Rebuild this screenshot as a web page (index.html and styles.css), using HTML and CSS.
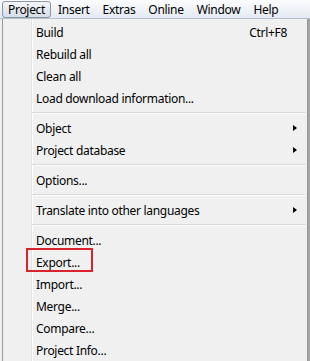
FILE: index.html
```html
<!DOCTYPE html>
<html lang="en">
<head>
  <meta charset="UTF-8" />
  <meta name="viewport" content="width=device-width, initial-scale=1" />
  <title>Project menu</title>
  <link rel="stylesheet" href="styles.css">
</head>
<body>
  <div class="menubar">
    <span class="top-item active">Project</span>
    <span class="top-item">Insert</span>
    <span class="top-item">Extras</span>
    <span class="top-item">Online</span>
    <span class="top-item">Window</span>
    <span class="top-item">Help</span>
  </div>

  <div class="screen">
    <div class="menu">
      <div class="item"><span>Build</span><span class="shortcut">Ctrl+F8</span></div>
      <div class="item"><span>Rebuild all</span></div>
      <div class="item"><span>Clean all</span></div>
      <div class="item"><span>Load download information...</span></div>
      <div class="sep"></div>
      <div class="item"><span>Object</span><span class="arrow"></span></div>
      <div class="item"><span>Project database</span><span class="arrow"></span></div>
      <div class="sep"></div>
      <div class="item"><span>Options...</span></div>
      <div class="sep"></div>
      <div class="item"><span>Translate into other languages</span><span class="arrow"></span></div>
      <div class="sep"></div>
      <div class="item"><span>Document...</span></div>
      <div class="item marked"><span>Export...</span><span class="highlight"></span></div>
      <div class="item"><span>Import...</span></div>
      <div class="item"><span>Merge...</span></div>
      <div class="item"><span>Compare...</span></div>
      <div class="item"><span>Project Info...</span></div>
    </div>
    <div class="edge"></div>
  </div>
</body>
</html>
```

FILE: styles.css
```css
body {
  margin: 0;
  height: 361px;
  background: #f0f0f0;
  font-family: "Segoe UI", "Noto Sans", sans-serif;
  font-size: 12px;
  letter-spacing: -0.3px;
  color: #000;
  overflow: hidden;
}
.menubar {
  display: flex;
  height: 18px;
  padding-left: 2px;
  background: linear-gradient(#fbfcfd, #e4eaf2);
  border-bottom: 1px solid #b9c0c9;
}
.top-item {
  display: flex;
  align-items: center;
  padding: 0 5px;
  margin-right: 1px;
  height: 17px;
  margin-top: 1px;
  box-sizing: border-box;
  border: 1px solid transparent;
}
.top-item.active {
  border-color: #8a96a6;
  border-radius: 3px;
  background: linear-gradient(#f4f6f9, #d6dde7);
}
.screen {
  display: flex;
  height: 342px;
}
.menu {
  margin-left: 2px;
  width: 304px;
  padding-top: 2px;
  border-left: 1px solid #979797;
  border-right: 1px solid #979797;
  background:
    linear-gradient(to right, transparent 28px, #e2e3e3 28px, #e2e3e3 29px, #fff 29px, #fff 30px, transparent 30px),
    #f0f0f0;
}
.item {
  position: relative;
  display: flex;
  align-items: center;
  height: 22px;
  padding-left: 33px;
  padding-right: 20px;
}
.shortcut {
  margin-left: auto;
}
.arrow {
  margin-left: auto;
  margin-right: -10px;
  width: 0;
  height: 0;
  border-top: 3.5px solid transparent;
  border-bottom: 3.5px solid transparent;
  border-left: 4px solid #000;
}
.sep {
  height: 1px;
  margin: 3px 2px 3px 29px;
  background: #d7d7d7;
  border-bottom: 1px solid #fff;
}
.highlight {
  position: absolute;
  left: 23px;
  top: -3px;
  width: 63px;
  height: 20px;
  border: 2px solid #d9232e;
}
.edge {
  flex: 1;
  background: #a5a5a5;
}
```
